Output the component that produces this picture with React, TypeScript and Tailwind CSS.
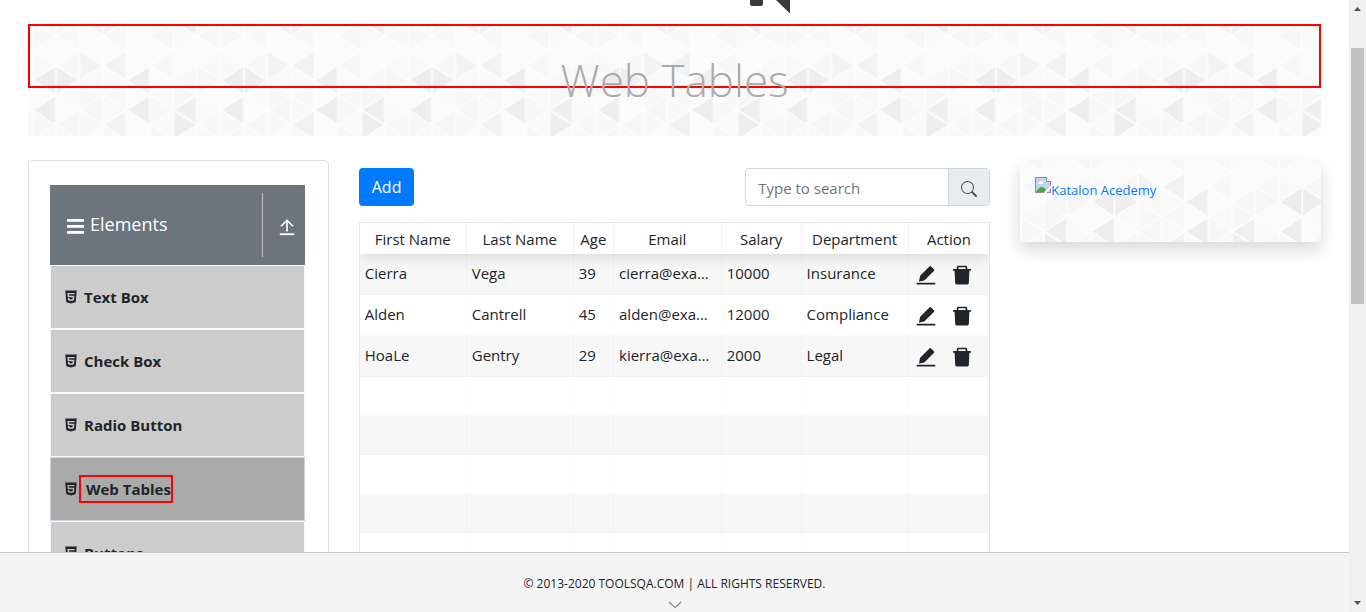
import { AiFillDelete, AiFillHtml5 } from "react-icons/ai";
import { BsSearch } from "react-icons/bs";

const COL = 23.5;
const ROW = 14.85;
const COLS = 8;
const ROWS = 12;

const BASE_SHADES = ["#f8f8f8", "#fbfbfb", "#f9f9f9", "#f8f8f8", "#fafafa", "#f7f7f7", "#fbfbfb"];

const DARK: Record<string, string> = {
  "0-4": "#ededed",
  "1-4": "#eeeeee",
  "4-4": "#efefef",
  "2-3": "#f3f3f3",
  "3-3": "#f3f3f3",
  "0-6": "#eeeeee",
  "4-6": "#eeeeee",
  "6-6": "#efefef",
  "3-7": "#f2f2f2",
  "6-7": "#eeeeee",
  "2-0": "#f2f2f2",
  "3-0": "#f2f2f2",
  "6-0": "#eeeeee",
};

function TrianglePattern({ id, x, y }: { id: string; x: number; y: number }) {
  const triangles = [];
  for (let s = 0; s < COLS; s++) {
    for (let k = 0; k <= ROWS; k++) {
      const pointsLeft = s % 2 === k % 2;
      const left = s * COL;
      const right = left + COL;
      const cy = k * ROW;
      const points = pointsLeft
        ? `${left},${cy} ${right},${cy - ROW} ${right},${cy + ROW}`
        : `${right},${cy} ${left},${cy - ROW} ${left},${cy + ROW}`;
      const row = k % ROWS;
      const fill = DARK[`${s}-${row}`] ?? BASE_SHADES[(s * 5 + row * 3 + s * row) % BASE_SHADES.length];
      triangles.push(<polygon key={`${s}-${k}`} points={points} fill={fill} />);
    }
  }
  return (
    <svg className="absolute inset-0 h-full w-full" aria-hidden="true">
      <defs>
        <pattern
          id={id}
          x={x}
          y={y}
          width={COL * COLS}
          height={ROW * ROWS}
          patternUnits="userSpaceOnUse"
        >
          <g stroke="#fdfdfd" strokeWidth="1.6" strokeLinejoin="round">
            {triangles}
          </g>
        </pattern>
      </defs>
      <rect width="100%" height="100%" fill={`url(#${id})`} />
    </svg>
  );
}

function MenuIcon() {
  return (
    <svg width="17" height="15" viewBox="0 0 17 15" fill="currentColor" className="mt-[3px]" aria-hidden="true">
      <rect width="17" height="2.700" rx=".6" />
      <rect y="6" width="17" height="2.700" rx=".6" />
      <rect y="12" width="17" height="2.700" rx=".6" />
    </svg>
  );
}

function UploadIcon() {
  return (
    <svg width="18" height="18" viewBox="0 0 18 18" fill="none" stroke="currentColor" aria-hidden="true">
      <path d="M1.800 16.200h14.400" strokeWidth="1.8" />
      <path d="M9 13.5V2.5M3 8.300 9 2.300 15 8.300" strokeWidth="1.6" />
    </svg>
  );
}

function EditIcon() {
  return (
    <svg width="24" height="24" viewBox="0 0 24 24" fill="currentColor" aria-hidden="true">
      <path d="M5 18.200 6 13.300q.1-.4.400-.7L15.700 3.300q.6-.6 1.200 0l3.200 3.200q.6.6 0 1.200L10.800 17q-.3.300-.7.400L5.400 18.500q-.4.1-.4-.3z" />
      <rect x="2.600" y="19.800" width="18.800" height="1.800" rx=".6" />
    </svg>
  );
}

function BrokenImageIcon() {
  return (
    <svg width="16" height="16" viewBox="0 0 16 16" className="shrink-0" aria-hidden="true">
      <path d="M.5.5h11l4 4v11H.5z" fill="#c3d4f1" stroke="#8f8f8f" />
      <path d="M11.5.5v4h4" fill="#fff" stroke="#8f8f8f" />
      <path d="M3 6.5a1.5 1.5 0 0 1 1.5-1.8 2 2 0 0 1 3.5.8 1 1 0 0 1 0 1.5H3.5z" fill="#fff" />
      <path d="M1 15c1.5-3 4-5 6-5s3 1.500 4 3l-2 2z" fill="#4fa83d" />
      <path d="M9 16 16 8.500V11L11.500 16z" fill="#fff" />
    </svg>
  );
}

const menuItems = ["Text Box", "Check Box", "Radio Button", "Web Tables", "Buttons"];

function Sidebar() {
  return (
    <aside className="rounded border border-[#dfdfdf] pt-6 pr-[23px] pb-6 pl-[21px]">
      <div className="flex h-20 items-center bg-[#6c757d] text-white">
        <div className="flex flex-1 items-center gap-1.5 pl-[17px] text-lg">
          <MenuIcon />
          <span className="pb-0.5">Elements</span>
        </div>
        <button
          type="button"
          aria-label="Collapse Elements"
          className="flex h-16 w-[43px] items-center justify-center border-l border-[#c0bfbd] pt-1 pl-1.5"
        >
          <UploadIcon />
        </button>
      </div>
      <ul>
        {menuItems.map((label) => {
          const active = label === "Web Tables";
          return (
            <li key={label}>
              <a
                href="#"
                className={
                  active
                    ? "flex h-16 items-center border border-[#ced4de] bg-[#aaaaaa] pl-3 text-[15px] font-bold"
                    : "flex h-16 items-center border border-[#f8f9fa] bg-[#cccccc] pl-3 text-[15px] font-bold"
                }
              >
                <AiFillHtml5 size={16} />
                {active ? (
                  <span className="flex h-7 items-center border-2 border-[#ff0000] pl-[5px]">{label}</span>
                ) : (
                  <span className="pl-[5px]">{label}</span>
                )}
              </a>
            </li>
          );
        })}
      </ul>
    </aside>
  );
}

const people = [
  { first: "Cierra", last: "Vega", age: 39, email: "cierra@example.com", salary: 10000, department: "Insurance" },
  { first: "Alden", last: "Cantrell", age: 45, email: "alden@example.com", salary: 12000, department: "Compliance" },
  { first: "HoaLe", last: "Gentry", age: 29, email: "kierra@example.com", salary: 2000, department: "Legal" },
];

const columns = [
  { name: "First Name", width: "w-[17%]" },
  { name: "Last Name", width: "w-[17%]" },
  { name: "Age", width: "w-[6.4%]" },
  { name: "Email", width: "w-[17.1%]" },
  { name: "Salary", width: "w-[12.7%]" },
  { name: "Department", width: "w-[17%]" },
  { name: "Action", width: "w-[12.8%]" },
];

const cell = "truncate border-r border-black/2 px-[5px] pb-0.5 last:border-r-0";

function PeopleTable() {
  return (
    <div className="mt-4 overflow-hidden border border-black/10">
      <table className="w-full table-fixed border-separate border-spacing-0 text-[15px]">
        <thead className="relative shadow-[0_2px_15px_0_rgba(0,0,0,0.15)]">
          <tr className="h-[31px]">
            {columns.map((c) => (
              <th
                key={c.name}
                scope="col"
                className={`${c.width} border-r border-black/5 bg-white p-0 pt-[2px] text-center font-normal last:border-r-0`}
              >
                {c.name}
              </th>
            ))}
          </tr>
        </thead>
        <tbody>
          {people.map((p) => (
            <tr key={p.first} className="h-[41px] odd:bg-black/3 [&>td]:border-b [&>td]:border-b-black/2">
              <td className={cell}>{p.first}</td>
              <td className={cell}>{p.last}</td>
              <td className={cell}>{p.age}</td>
              <td className={cell}>{p.email}</td>
              <td className={cell}>{p.salary}</td>
              <td className={cell}>{p.department}</td>
              <td className="pt-0.5 pl-[5px]">
                <div className="flex gap-3">
                  <button type="button" aria-label={`Edit ${p.first}`}>
                    <EditIcon />
                  </button>
                  <button type="button" aria-label={`Delete ${p.first}`}>
                    <AiFillDelete size={24} />
                  </button>
                </div>
              </td>
            </tr>
          ))}
          {[0, 1, 2, 3, 4, 5, 6].map((row) => (
            <tr key={row} className="h-[39px] odd:bg-black/3 [&>td]:border-b [&>td]:border-b-black/2">
              {columns.map((c) => (
                <td key={c.name} className="border-r border-black/2 last:border-r-0" />
              ))}
            </tr>
          ))}
        </tbody>
      </table>
    </div>
  );
}

export default function App() {
  return (
    <div className="flex h-screen overflow-hidden bg-white font-['Open_Sans','Noto_Sans',sans-serif] text-[#212529]">
      <div className="flex min-w-0 flex-1 flex-col">
        <div className="min-h-0 flex-1 overflow-hidden px-7">
          <div className="flex h-6 items-start justify-center">
            <svg width="230" height="14" viewBox="0 0 230 14" fill="#3a3a3a" aria-hidden="true">
              <path d="M190 0h13v4q0 2-2 2h-9q-2 0-2-2zM216 0h14v13.500z" />
            </svg>
          </div>

          <header className="relative h-28">
            <TrianglePattern id="header-triangles" x={4.5} y={-3} />
            <div className="absolute inset-x-0 top-0 h-16 border-2 border-[#ff0000]" />
            <h1 className="relative pt-[22px] text-center text-[44px] leading-[68px] font-light text-[#aaaaaa]">
              Web Tables
            </h1>
          </header>

          <div className="mt-6 grid grid-cols-4 items-start gap-[30px]">
            <Sidebar />

            <main className="col-span-2 pt-2">
              <div className="flex justify-between">
                <button type="button" className="h-[38px] rounded bg-[#007bff] px-[13px] text-white">
                  Add
                </button>
                <div className="flex h-[38px] w-[245px] overflow-hidden rounded border border-[#ced4da]">
                  <input
                    type="text"
                    aria-label="Type to search"
                    placeholder="Type to search"
                    className="min-w-0 flex-1 px-3 pt-[2px] text-[15px] outline-none placeholder:text-[#6c757d]"
                  />
                  <button
                    type="button"
                    aria-label="Search"
                    className="flex w-[41px] items-center justify-center border-l border-[#ced4da] bg-[#e9ecef] pt-1 text-[#495057]"
                  >
                    <BsSearch size={16} />
                  </button>
                </div>
              </div>
              <PeopleTable />
            </main>

            <section className="relative h-[82px] shadow-[0_8px_16px_rgba(0,0,0,0.15)]">
              <TrianglePattern id="card-triangles" x={71} y={-17.5} />
              <a href="#" className="relative flex items-start px-[15px] pt-[17px] text-[13px] leading-5 text-[#007bff]">
                <BrokenImageIcon />
                <span className="pt-[3px]">Katalon Acedemy</span>
              </a>
            </section>
          </div>
        </div>

        <footer className="flex h-[60px] shrink-0 flex-col items-center border-t border-[#c8c8c8] bg-[#f4f4f4] pt-5 text-xs">
          <span className="leading-[22px]">© 2013-2020 TOOLSQA.COM | ALL RIGHTS RESERVED.</span>
          <svg
            width="14"
            height="8"
            viewBox="0 0 14 8"
            fill="none"
            stroke="#888888"
            className="mt-1.5"
            aria-hidden="true"
          >
            <path d="M.8 1 7 6.500 13.200 1" strokeWidth="1.200" />
          </svg>
        </footer>
      </div>

      <div className="flex w-[17px] shrink-0 flex-col items-center bg-[#f0f0f0]" aria-hidden="true">
        <svg width="17" height="17" viewBox="0 0 17 17" fill="#505050" className="shrink-0">
          <path d="M5 11h7L8.500 7z" />
        </svg>
        <div className="h-full w-full px-0.5 pt-[31px]">
          <div className="h-1/2 max-h-64 bg-[#c1c1c1]" />
        </div>
        <svg width="17" height="17" viewBox="0 0 17 17" fill="#505050" className="shrink-0">
          <path d="M5 6h7L8.500 10z" />
        </svg>
      </div>
    </div>
  );
}
